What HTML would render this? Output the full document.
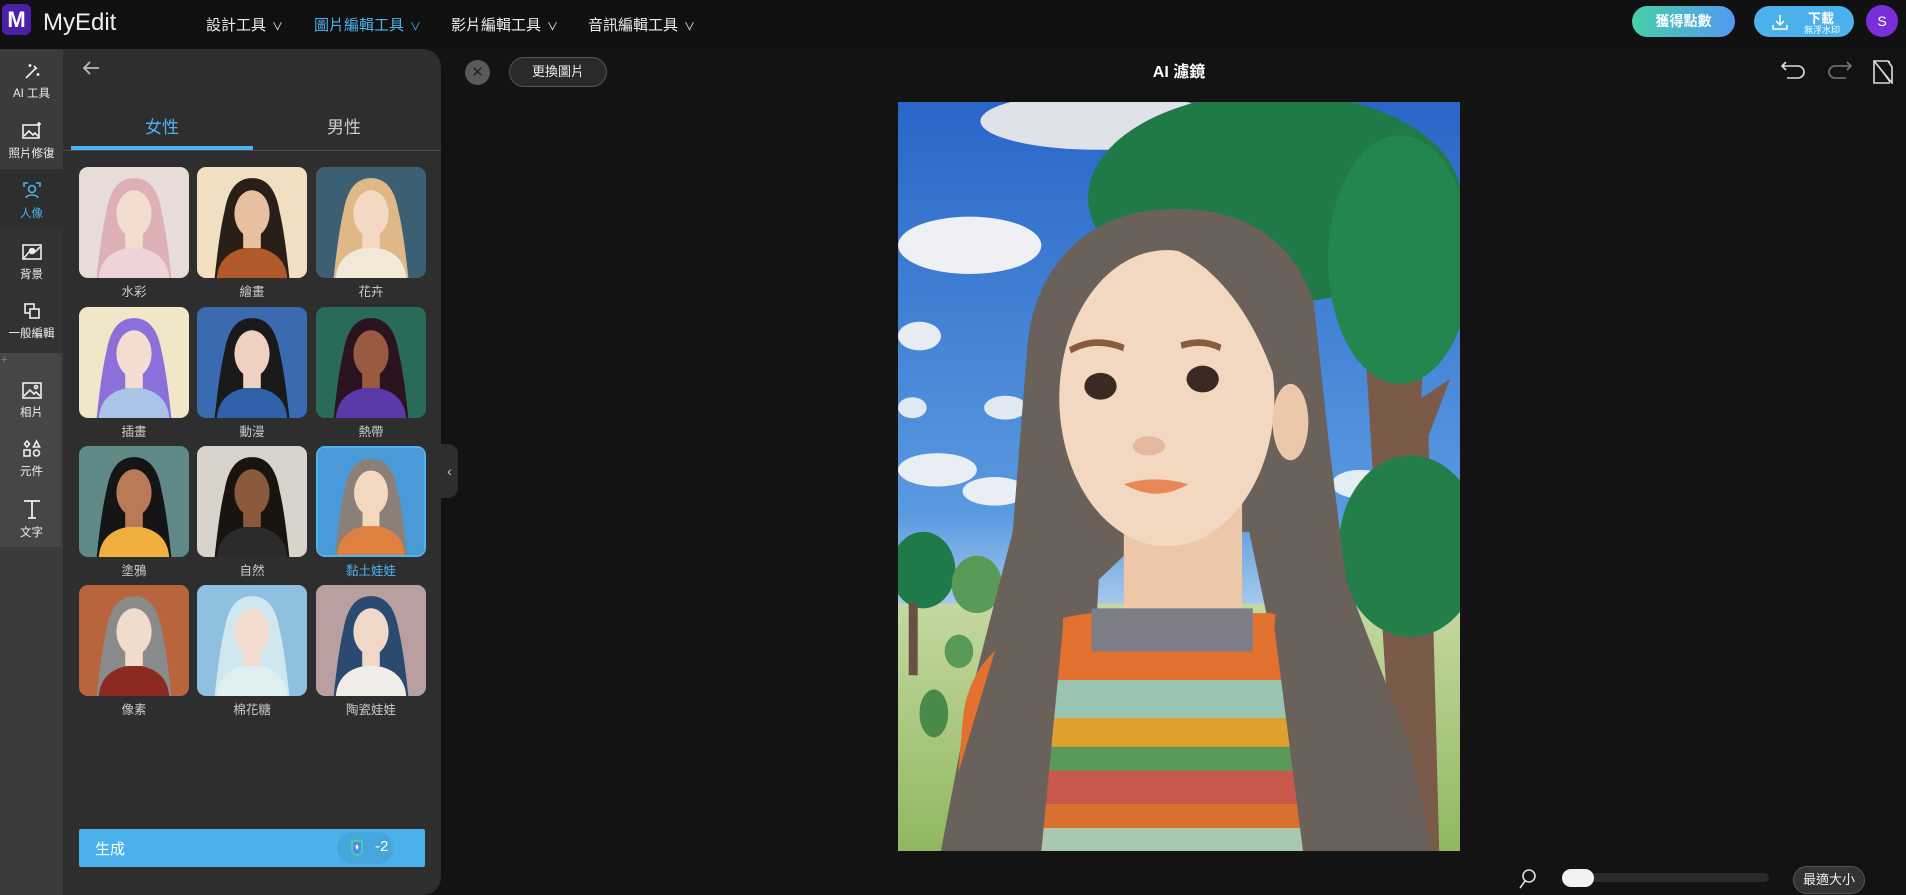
<!DOCTYPE html>
<html><head><meta charset="utf-8"><style>
*{margin:0;padding:0;box-sizing:border-box}
body{width:1906px;height:895px;background:#131313;font-family:"Liberation Sans","Noto Sans CJK TC",sans-serif;color:#ddd;overflow:hidden;position:relative}
.abs{position:absolute}
.top{left:0;top:0;width:1906px;height:49px;background:#111}
.nav{top:14px;font-size:15px;color:#eee}
.nav span{font-size:11px;margin-left:6px}
.rail{left:0;top:49px;width:63px;height:846px;background:#3b3b3b}
.ri{position:absolute;left:0;width:63px;text-align:center;font-size:11.5px;color:#eee}
.ri svg{display:block;margin:0 auto 4px}
.panel{left:63px;top:49px;width:378px;height:846px;background:#2e2e2e;border-top-right-radius:18px;border-bottom-right-radius:18px}
.tile{position:absolute;width:110px;height:111px;border-radius:9px;overflow:hidden}
.lab{position:absolute;width:110px;text-align:center;font-size:12.5px;color:#ccc}
</style></head><body>
<div class="abs top"></div>
<div class="abs" style="left:2px;top:4px;width:29px;height:31px;background:#4b1fa6;border-radius:6px;color:#fff;font-weight:bold;font-size:22px;text-align:center;line-height:31px">M</div>
<div class="abs" style="left:43px;top:9px;font-size:24px;color:#eee">MyEdit</div>
<div class="abs nav" style="left:206px">設計工具<span>∨</span></div>
<div class="abs nav" style="left:314px;color:#4cb4f0">圖片編輯工具<span>∨</span></div>
<div class="abs nav" style="left:451px">影片編輯工具<span>∨</span></div>
<div class="abs nav" style="left:588px">音訊編輯工具<span>∨</span></div>
<div class="abs" style="left:1632px;top:6px;width:103px;height:31px;border-radius:16px;background:linear-gradient(90deg,#46cfa8,#5498f2);color:#fff;font-size:14px;font-weight:bold;text-align:center;line-height:31px">獲得點數</div>
<div class="abs" style="left:1754px;top:6px;width:100px;height:31px;border-radius:16px;background:#4bb1ea;color:#fff">
<svg class="abs" style="left:17px;top:7px" width="18" height="18" viewBox="0 0 18 18" fill="none" stroke="#fff" stroke-width="1.5"><path d="M9 2v10M5 8l4 4 4-4M2 12v4h14v-4"/></svg>
<div class="abs" style="left:44px;top:2px;font-size:13px;font-weight:bold;width:46px;text-align:center">下載</div>
<div class="abs" style="left:40px;top:17px;font-size:9px;width:56px;text-align:center">無浮水印</div></div>
<div class="abs" style="left:1866px;top:5px;width:32px;height:32px;border-radius:50%;background:#7a2fd8;color:#fff;text-align:center;line-height:32px;font-size:14px">S</div>

<div class="abs rail"></div>
<div class="abs" style="left:0;top:169px;width:63px;height:60px;background:#2e2e2e"></div>
<div class="abs" style="left:0;top:229px;width:63px;height:124px;background:#333"></div>
<div class="abs" style="left:0;top:353px;width:61px;height:194px;background:#464646;border-radius:0 4px 4px 0"></div>
<div class="ri" style="top:61px"><svg width="20" height="20" viewBox="0 0 20 20" fill="none" stroke="#eee" stroke-width="1.6"><path d="M4 17L14 7M12 5l3 3M8 3v3M6.5 4.5h3M16 12v3M14.5 13.5h3"/></svg>AI 工具</div>
<div class="ri" style="top:121px"><svg width="22" height="20" viewBox="0 0 22 20" fill="none" stroke="#eee" stroke-width="1.6"><rect x="2" y="4" width="16" height="13"/><path d="M3 15l5-5 4 4 2-2 4 4M18 1v4M16 3h4"/></svg>照片修復</div>
<div class="ri" style="top:181px;color:#4cb4f0"><svg width="20" height="20" viewBox="0 0 20 20" fill="none" stroke="#4cb4f0" stroke-width="1.6"><circle cx="10" cy="8" r="3.5"/><path d="M4 17c1-4 11-4 12 0M2 6V2h4M18 6V2h-4"/></svg>人像</div>
<div class="ri" style="top:242px"><svg width="22" height="20" viewBox="0 0 22 20" fill="none" stroke="#eee" stroke-width="1.6"><rect x="2" y="3" width="18" height="14"/><circle cx="11" cy="9" r="2.5" fill="#eee"/><path d="M3 16l5-6M19 5l-5 5"/></svg>背景</div>
<div class="ri" style="top:301px"><svg width="20" height="20" viewBox="0 0 20 20" fill="none" stroke="#eee" stroke-width="1.6"><rect x="3" y="3" width="9" height="9"/><rect x="8" y="8" width="9" height="9" fill="#333"/></svg>一般編輯</div>
<div class="abs" style="left:1px;top:354px;font-size:11px;color:#888">+</div>
<div class="ri" style="top:380px"><svg width="22" height="20" viewBox="0 0 22 20" fill="none" stroke="#eee" stroke-width="1.6"><rect x="2" y="3" width="18" height="15"/><path d="M3 16l6-6 4 4 2-2 4 4"/><circle cx="15" cy="7" r="1.5"/></svg>相片</div>
<div class="ri" style="top:439px"><svg width="20" height="20" viewBox="0 0 20 20" fill="none" stroke="#eee" stroke-width="1.6"><path d="M5 2l2.5 3L5 8 2.5 5zM14.5 2l3 6h-6z"/><rect x="2" y="11" width="6" height="6"/><circle cx="14.5" cy="14" r="3"/></svg>元件</div>
<div class="ri" style="top:498px"><svg width="20" height="22" viewBox="0 0 20 22" fill="none" stroke="#eee" stroke-width="1.8"><path d="M2 3h16M10 3v17M6 20h8"/></svg>文字</div>

<div class="abs panel"></div>
<svg class="abs" style="left:82px;top:60px" width="18" height="16" viewBox="0 0 18 16" fill="none" stroke="#bbb" stroke-width="1.8"><path d="M17 8H2M8 2L2 8l6 6"/></svg>
<div class="abs" style="left:145px;top:113px;font-size:17px;color:#4cb4f0">女性</div>
<div class="abs" style="left:327px;top:113px;font-size:17px;color:#ccc">男性</div>
<div class="abs" style="left:63px;top:150px;width:378px;height:1px;background:#4a4a4a"></div>
<div class="abs" style="left:71px;top:146px;width:182px;height:4px;background:#4cb4f0"></div>

<div id="tiles"></div>
<div class="abs" style="left:441px;top:444px;width:17px;height:54px;background:#2e2e2e;border-radius:0 10px 10px 0;color:#ccc;font-size:14px;line-height:54px;text-align:center">‹</div>

<div class="abs" style="left:79px;top:829px;width:346px;height:38px;background:#4bb1ea;border-radius:2px">
<div class="abs" style="left:16px;top:9px;color:#fff;font-size:15px">生成</div>
<div class="abs" style="left:258px;top:3px;width:56px;height:32px;border-radius:16px;background:#45a5dc"></div>
<svg class="abs" style="left:270px;top:9px" width="18" height="20" viewBox="0 0 18 20"><path d="M2 2h12v10a6 6 0 0 1-12 0z" fill="#3ed2a0"/><path d="M4 4h8v8a4 4 0 0 1-8 0z" fill="#5a86f0"/><path d="M8 6l1.5 3L8 12l-1.5-3z" fill="#fff"/></svg>
<div class="abs" style="left:296px;top:9px;color:#fff;font-size:15px">-2</div>
</div>

<div class="abs" style="left:465px;top:60px;width:25px;height:25px;border-radius:50%;background:#5a5a5a;color:#222;font-size:15px;text-align:center;line-height:25px">✕</div>
<div class="abs" style="left:509px;top:57px;width:98px;height:30px;border-radius:15px;border:1px solid #555;background:#2a2a2a;color:#eee;font-size:13px;text-align:center;line-height:28px">更換圖片</div>
<div class="abs" style="left:1100px;top:58px;width:158px;text-align:center;color:#fff;font-weight:bold;font-size:16px">AI 濾鏡</div>
<svg class="abs" style="left:1780px;top:60px" width="28" height="24" viewBox="0 0 28 24" fill="none" stroke="#ddd" stroke-width="1.6"><path d="M6 2L2 6l4 4M2 6h16a6 6 0 0 1 0 12H7"/></svg>
<svg class="abs" style="left:1825px;top:60px" width="28" height="24" viewBox="0 0 28 24" fill="none" stroke="#777" stroke-width="1.6"><path d="M22 2l4 4-4 4M26 6H10a6 6 0 0 0 0 12h11"/></svg>
<svg class="abs" style="left:1873px;top:60px" width="22" height="24" viewBox="0 0 22 24" fill="none" stroke="#ddd" stroke-width="1.6"><rect x="1" y="1" width="16" height="22" fill="#eee" stroke="none"/><path d="M1 1v22h16M1 1l18 22V7l-4-6z" fill="#131313"/></svg>

<svg class="abs" style="left:898px;top:102px" width="562" height="749" viewBox="0 0 1568 1568" preserveAspectRatio="none">
<defs><linearGradient id="sky" x1="0" y1="0" x2="0" y2="1"><stop offset="0" stop-color="#2a66c8"/><stop offset=".55" stop-color="#5a9ae0"/><stop offset=".7" stop-color="#b8d4ee"/></linearGradient>
<linearGradient id="gr" x1="0" y1="0" x2="0" y2="1"><stop offset="0" stop-color="#c4d8a0"/><stop offset="1" stop-color="#90b860"/></linearGradient></defs>
<rect width="1568" height="1568" fill="url(#sky)"/>
<rect y="1050" width="1568" height="518" fill="url(#gr)"/>
<ellipse cx="560" cy="40" rx="330" ry="60" fill="#dfe2e8"/><ellipse cx="200" cy="300" rx="200" ry="60" fill="#eef0f4"/>
<ellipse cx="60" cy="490" rx="60" ry="30" fill="#e8ecf2"/><ellipse cx="300" cy="640" rx="60" ry="25" fill="#e0e8f2"/><ellipse cx="40" cy="640" rx="40" ry="22" fill="#e0e8f2"/>
<ellipse cx="110" cy="770" rx="110" ry="35" fill="#e8eef4"/><ellipse cx="270" cy="815" rx="90" ry="30" fill="#e8eef4"/><ellipse cx="1290" cy="800" rx="80" ry="30" fill="#e4ecf4"/>
<path d="M1290 350L1390 1568h120L1480 700l60-120-80 40 10-180z" fill="#7a5a48"/>
<ellipse cx="1050" cy="200" rx="520" ry="220" fill="#1f7a48"/><ellipse cx="1400" cy="330" rx="200" ry="260" fill="#23864e"/>
<ellipse cx="1430" cy="930" rx="200" ry="190" fill="#237e4a"/>
<ellipse cx="70" cy="980" rx="90" ry="80" fill="#1f7a4a"/><rect x="30" y="1050" width="25" height="150" fill="#6a5040"/><ellipse cx="220" cy="1010" rx="70" ry="60" fill="#5a9a58"/><ellipse cx="100" cy="1280" rx="40" ry="50" fill="#4a8a48"/><ellipse cx="170" cy="1150" rx="40" ry="35" fill="#5a9a58"/>
<path d="M740 225C560 230 380 320 360 520L320 900L200 1250L120 1568H520L560 1000L700 900L980 900L1050 1150L1150 1568H1490L1400 1300L1250 1000L1200 700L1160 420C1100 280 950 215 740 225z" fill="#6a615a"/>
<rect x="630" y="840" width="330" height="260" fill="#ecc8a8"/>
<path d="M180 1300Q200 1100 540 1070L1040 1070Q1340 1120 1340 1300L1380 1568H150z" fill="#e2702e"/>
<rect x="540" y="1060" width="450" height="90" fill="#7d7d88"/>
<rect x="300" y="1210" width="1000" height="80" fill="#98c4b0"/><rect x="300" y="1290" width="1000" height="60" fill="#e0a030"/><rect x="300" y="1350" width="1000" height="50" fill="#5a9a58"/><rect x="300" y="1400" width="1000" height="70" fill="#c8584a"/><rect x="300" y="1470" width="1000" height="50" fill="#d87030"/><rect x="300" y="1520" width="1000" height="48" fill="#a8c8b0"/>
<path d="M360 600L330 1000L150 1450L120 1568H400L460 1100L470 700z" fill="#6a615a"/>
<path d="M1100 600L1050 1100L1130 1568H1490L1430 1350L1250 1000z" fill="#6a615a"/>
<ellipse cx="750" cy="620" rx="300" ry="310" fill="#f2d8c0"/>
<ellipse cx="1095" cy="670" rx="50" ry="80" fill="#ecc8aa"/>
<path d="M740 240C900 240 1060 350 1120 580L1060 600C1000 450 880 330 740 300z" fill="#6a615a"/>
<path d="M480 520Q550 490 630 515M790 510Q850 495 900 515" stroke="#8a5a40" stroke-width="14" fill="none"/>
<ellipse cx="565" cy="595" rx="45" ry="28" fill="#3a2a24"/><ellipse cx="850" cy="580" rx="45" ry="28" fill="#3a2a24"/>
<ellipse cx="700" cy="720" rx="45" ry="20" fill="#e6b8a0"/>
<path d="M630 800Q715 780 810 800Q720 840 630 800z" fill="#e8885a"/>
</svg>

<svg class="abs" style="left:1518px;top:868px" width="20" height="22" viewBox="0 0 20 22" fill="none" stroke="#ddd" stroke-width="1.6"><circle cx="11" cy="8" r="6"/><path d="M7 13l-5 7"/></svg>
<div class="abs" style="left:1562px;top:873px;width:207px;height:9px;border-radius:5px;background:#2a2a2a"></div>
<div class="abs" style="left:1562px;top:869px;width:32px;height:18px;border-radius:9px;background:#f2f2f2"></div>
<div class="abs" style="left:1793px;top:866px;width:72px;height:28px;border-radius:14px;background:#333;border:1px solid #555;color:#eee;font-size:13px;text-align:center;line-height:26px">最適大小</div>

<script>
var T=[["水彩","#e8dcd8","#dcb0b4","#f3dcd0","#eed4d8"],["繪畫","#f0dfc0","#2a1e18","#e8c0a0","#b05a2a"],["花卉","#3d5f74","#e0b888","#f3d8c4","#f2e8d8"],
["插畫","#f0e6c8","#8a70d8","#f5dcd0","#a8c4e8"],["動漫","#3a6ab0","#1a1a1a","#f0d0c0","#3060a8"],["熱帶","#2a6a58","#2a1420","#9a5a40","#5a3aa8"],
["塗鴉","#5f8a88","#151515","#b87a58","#f0b040"],["自然","#d8d4cc","#1a1410","#8a5a3a","#2a2a2a"],["黏土娃娃","#4a9ad8","#8a8078","#f3d8c0","#e08040"],
["像素","#b8643c","#8a8a8a","#f0dccc","#8a2a20"],["棉花糖","#90c0e0","#cfe8f0","#f3dcd0","#e0f0f0"],["陶瓷娃娃","#b8a0a0","#2a4a70","#f0d8c8","#f0ece8"]];
var xs=[79,197,316],ys=[167,307,446,585],h="";
T.forEach(function(t,i){var x=xs[i%3],y=ys[Math.floor(i/3)],sel=i==8;
h+='<div class="tile" style="left:'+x+'px;top:'+y+'px;'+(sel?'border:2px solid #4cb4f0;':'')+'"><svg width="100%" height="100%" viewBox="0 0 100 100" preserveAspectRatio="none"><rect width="100" height="100" fill="'+t[1]+'"/><path d="M15 110Q20 60 25 40Q30 10 50 10Q70 10 75 40Q80 60 85 110z" fill="'+t[2]+'"/><path d="M18 100Q20 75 50 72Q80 75 82 100z" fill="'+t[4]+'"/><rect x="42" y="55" width="16" height="18" fill="'+t[3]+'"/><ellipse cx="50" cy="42" rx="16" ry="21" fill="'+t[3]+'"/><path d="M33 40Q40 18 50 20Q62 20 68 40Q66 22 50 17Q34 20 33 40z" fill="'+t[2]+'"/></svg></div>';
h+='<div class="lab" style="left:'+x+'px;top:'+(y+114)+'px;'+(sel?'color:#4cb4f0':'')+'">'+t[0]+'</div>';});
document.getElementById("tiles").innerHTML=h;
</script>
</body></html>
